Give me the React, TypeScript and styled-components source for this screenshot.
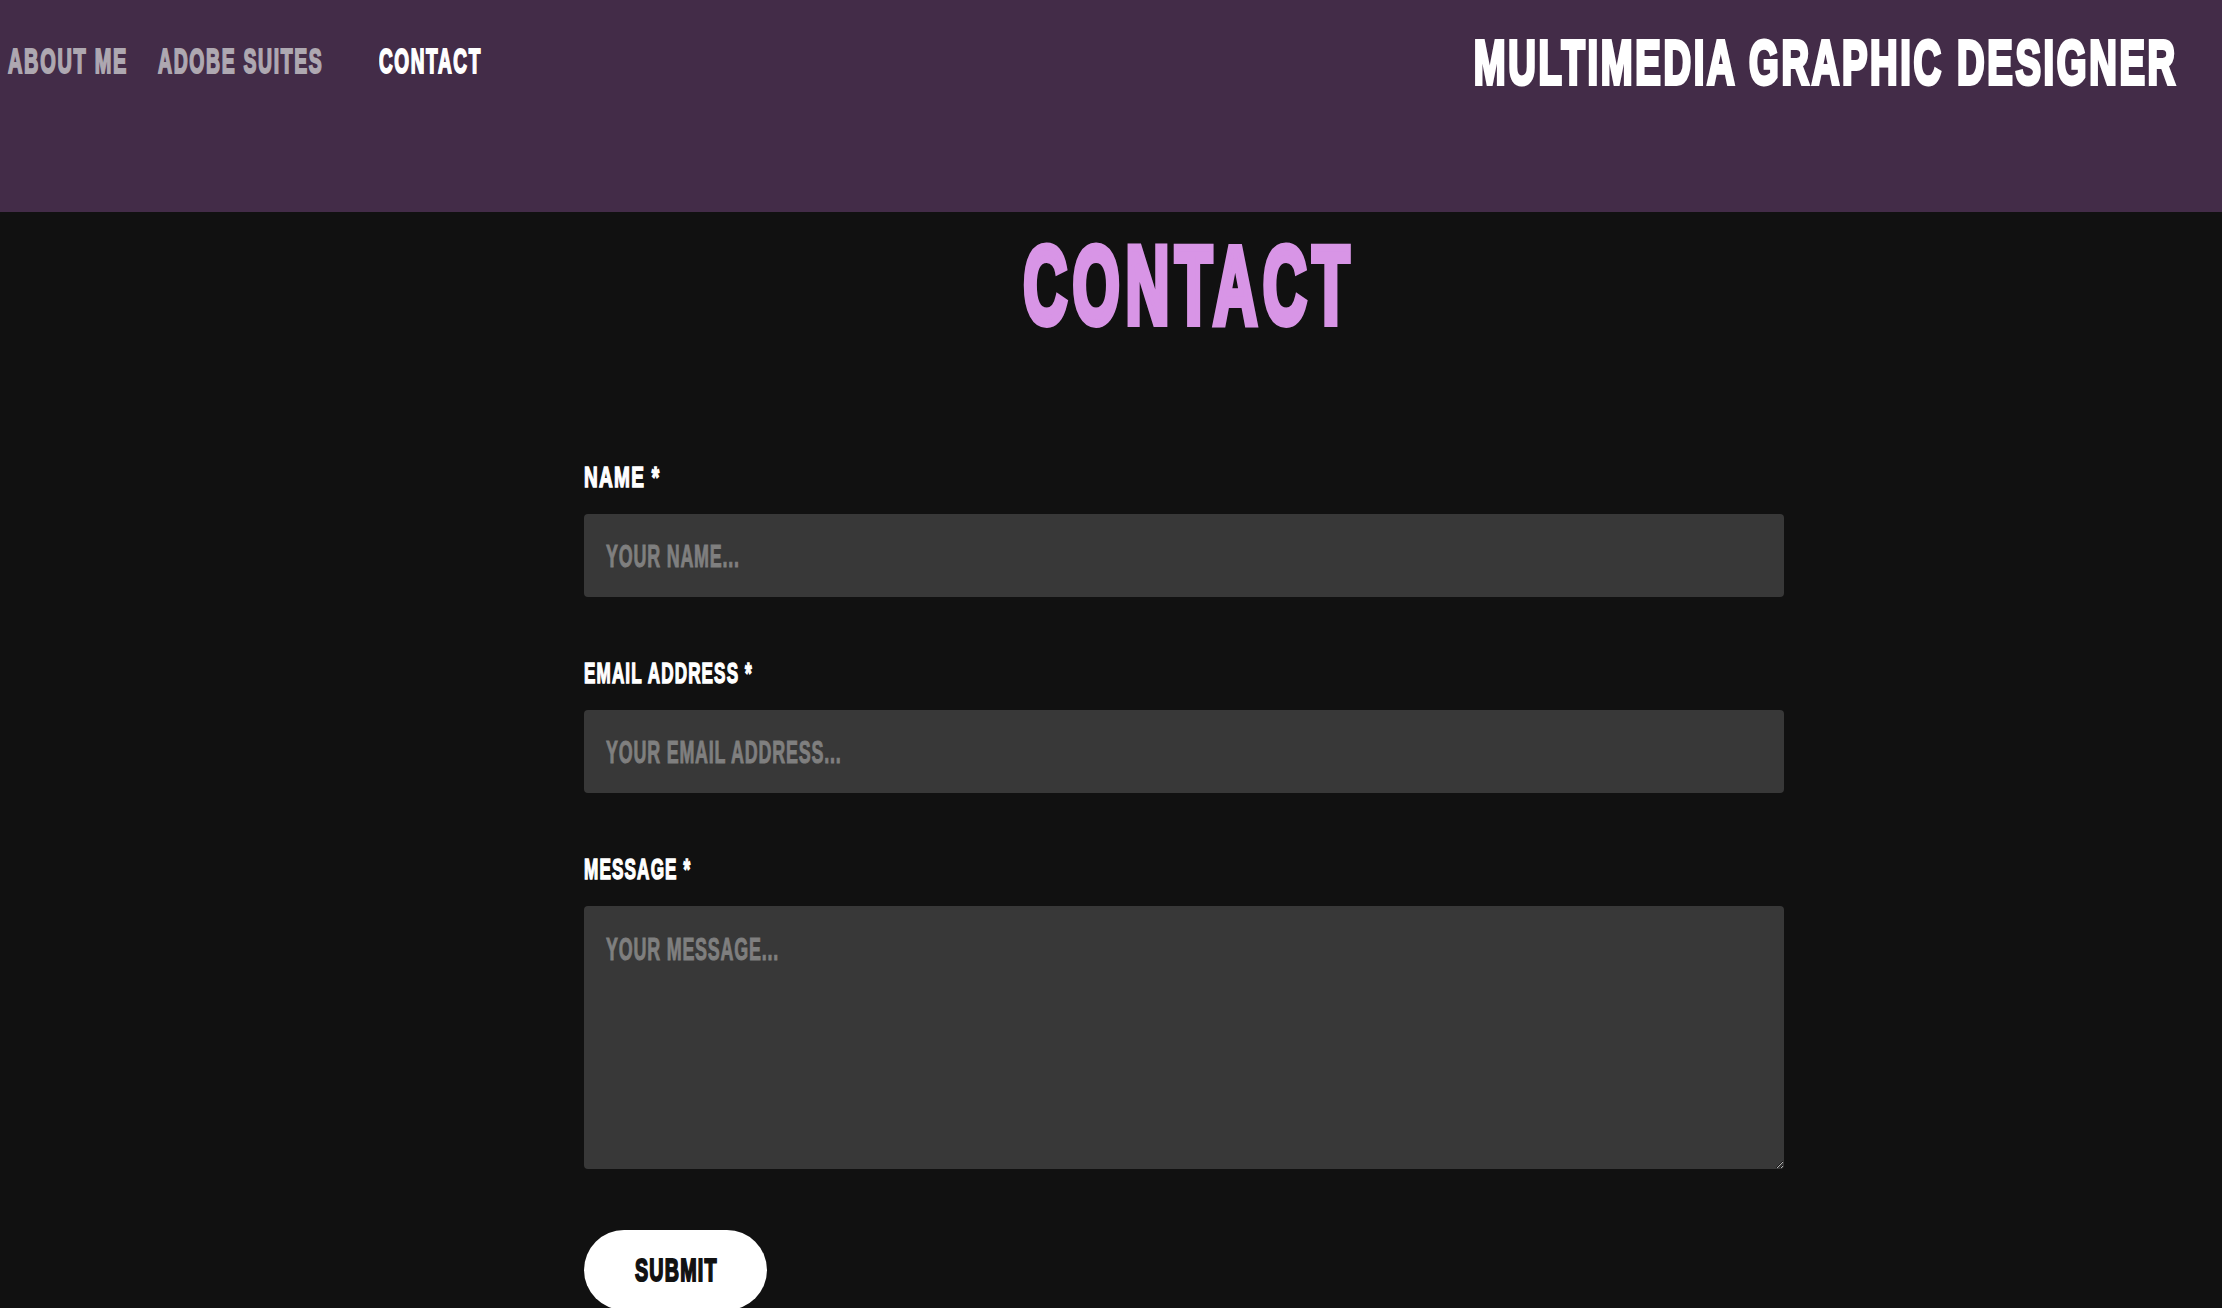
import React, { useState } from "react";
import styled, { createGlobalStyle } from "styled-components";

const GlobalStyle = createGlobalStyle`
  html, body {
    margin: 0;
    padding: 0;
    background: #111111;
  }
  body {
    font-family: "Liberation Sans", Arial, sans-serif;
  }
  * {
    box-sizing: border-box;
  }
`;

/* Condensed display type: a bold grotesque narrowed horizontally,
   thickened with a light stroke and opened up with tracking. */
const Squeeze = styled.span<{ $k: number; $stroke: number; $ls: number; $origin?: string }>`
  display: inline-block;
  white-space: nowrap;
  letter-spacing: ${(p) => p.$ls}px;
  margin-right: ${(p) => -p.$ls}px;
  transform: scaleX(${(p) => p.$k});
  transform-origin: ${(p) => p.$origin ?? "left"} center;
  -webkit-text-stroke: ${(p) => p.$stroke}px currentColor;
`;

const Page = styled.div`
  width: 2222px;
  height: 1308px;
  background: #111111;
  overflow: hidden;
`;

const Header = styled.header`
  height: 212px;
  background: #432c48;
  display: flex;
  justify-content: space-between;
  align-items: flex-start;
  padding: 0 49px 0 8px;
`;

const Nav = styled.nav`
  display: grid;
  grid-template-columns: 150px 221px auto;
  padding-top: 43px;
`;

const NavLink = styled.a<{ $active?: boolean }>`
  font-size: 35px;
  line-height: 35px;
  font-weight: 700;
  color: ${(p) => (p.$active ? "#ffffff" : "#aea8b1")};
  text-decoration: none;
  white-space: nowrap;
  cursor: pointer;
`;

const SiteTitle = styled.h1`
  margin: 0;
  padding-top: 31px;
  font-size: 63px;
  line-height: 63px;
  font-weight: 700;
  color: #ffffff;
  text-align: right;
  white-space: nowrap;
`;

const Main = styled.main`
  width: 1200px;
  margin-left: 584px;
  padding-top: 18px;
  display: flex;
  flex-direction: column;
`;

const Heading = styled.h2`
  margin: 0;
  text-align: center;
  font-size: 110px;
  line-height: 110px;
  font-weight: 700;
  color: #d895e6;
  white-space: nowrap;
`;

const Form = styled.form`
  margin-top: 122px;
  display: flex;
  flex-direction: column;
`;

const Field = styled.div`
  display: flex;
  flex-direction: column;
  margin-bottom: 61px;
`;

const Label = styled.label`
  font-size: 30px;
  line-height: 30px;
  font-weight: 700;
  color: #ffffff;
  margin-bottom: 22px;
  white-space: nowrap;
`;

const FieldBox = styled.div`
  position: relative;
  width: 100%;
`;

const TextInput = styled.input`
  display: block;
  width: 100%;
  height: 83px;
  border: none;
  border-radius: 4px;
  background: #383838;
  color: #ffffff;
  font-family: "Liberation Sans", Arial, sans-serif;
  font-size: 24px;
  padding: 0 22px;
  outline: none;
`;

const TextArea = styled.textarea`
  display: block;
  width: 100%;
  height: 263px;
  border: none;
  border-radius: 4px;
  background: #383838;
  color: #ffffff;
  font-family: "Liberation Sans", Arial, sans-serif;
  font-size: 24px;
  padding: 28px 22px;
  outline: none;
  resize: both;
`;

const Placeholder = styled.span<{ $top: number }>`
  position: absolute;
  left: 22px;
  top: ${(p) => p.$top}px;
  font-size: 32px;
  line-height: 32px;
  font-weight: 700;
  color: #7f7f7f;
  pointer-events: none;
  white-space: nowrap;
`;

const SubmitButton = styled.button`
  width: 183px;
  height: 80px;
  border: none;
  border-radius: 40px;
  background: #ffffff;
  color: #111111;
  font-family: "Liberation Sans", Arial, sans-serif;
  font-size: 32px;
  line-height: 32px;
  font-weight: 700;
  padding: 0;
  display: flex;
  align-items: center;
  justify-content: center;
  overflow: hidden;
  cursor: pointer;
`;

type FieldProps = {
  id: string;
  label: string;
  placeholder: string;
  multiline?: boolean;
  labelK: number;
};

function FormField({ id, label, placeholder, multiline, labelK }: FieldProps) {
  const [value, setValue] = useState("");
  return (
    <Field>
      <Label htmlFor={id}>
        <Squeeze $k={labelK} $stroke={1.5} $ls={2}>
          {label}
        </Squeeze>
      </Label>
      <FieldBox>
        {multiline ? (
          <TextArea id={id} value={value} onChange={(e) => setValue(e.target.value)} />
        ) : (
          <TextInput id={id} value={value} onChange={(e) => setValue(e.target.value)} />
        )}
        {value === "" && (
          <Placeholder $top={multiline ? 27 : 26}>
            <Squeeze $k={0.56} $stroke={1} $ls={1.4}>
              {placeholder}
            </Squeeze>
          </Placeholder>
        )}
      </FieldBox>
    </Field>
  );
}

export default function App() {
  return (
    <Page>
      <GlobalStyle />
      <Header>
        <Nav>
          <NavLink>
            <Squeeze $k={0.57} $stroke={2} $ls={3}>
              ABOUT ME
            </Squeeze>
          </NavLink>
          <NavLink>
            <Squeeze $k={0.554} $stroke={2} $ls={3}>
              ADOBE SUITES
            </Squeeze>
          </NavLink>
          <NavLink $active>
            <Squeeze $k={0.543} $stroke={2} $ls={3}>
              CONTACT
            </Squeeze>
          </NavLink>
        </Nav>
        <SiteTitle>
          <Squeeze $k={0.606} $stroke={4} $ls={4.4} $origin="right">
            MULTIMEDIA GRAPHIC DESIGNER
          </Squeeze>
        </SiteTitle>
      </Header>
      <Main>
        <Heading>
          <Squeeze $k={0.547} $stroke={8} $ls={11} $origin="center">
            CONTACT
          </Squeeze>
        </Heading>
        <Form onSubmit={(e) => e.preventDefault()}>
          <FormField id="name" label="NAME *" placeholder="YOUR NAME..." labelK={0.635} />
          <FormField
            id="email"
            label="EMAIL ADDRESS *"
            placeholder="YOUR EMAIL ADDRESS..."
            labelK={0.569}
          />
          <FormField
            id="message"
            label="MESSAGE *"
            placeholder="YOUR MESSAGE..."
            multiline
            labelK={0.571}
          />
          <div>
            <SubmitButton type="submit">
              <Squeeze $k={0.615} $stroke={2} $ls={2} $origin="center">
                SUBMIT
              </Squeeze>
            </SubmitButton>
          </div>
        </Form>
      </Main>
    </Page>
  );
}
